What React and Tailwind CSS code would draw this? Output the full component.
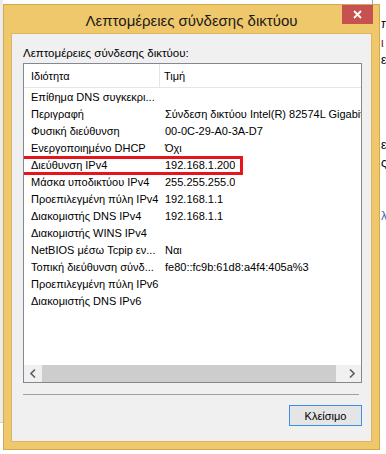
export default function App() {
  const rows = [
    ["Επίθημα DNS συγκεκρι...", ""],
    ["Περιγραφή", "Σύνδεση δικτύου Intel(R) 82574L Gigabit Network Connection"],
    ["Φυσική διεύθυνση", "00-0C-29-A0-3A-D7"],
    ["Ενεργοποιημένο DHCP", "Όχι"],
    ["Διεύθυνση IPv4", "192.168.1.200"],
    ["Μάσκα υποδικτύου IPv4", "255.255.255.0"],
    ["Προεπιλεγμένη πύλη IPv4", "192.168.1.1"],
    ["Διακομιστής DNS IPv4", "192.168.1.1"],
    ["Διακομιστής WINS IPv4", ""],
    ["NetBIOS μέσω Tcpip εν...", "Ναι"],
    ["Τοπική διεύθυνση σύνδ...", "fe80::fc9b:61d8:a4f4:405a%3"],
    ["Προεπιλεγμένη πύλη IPv6", ""],
    ["Διακομιστής DNS IPv6", ""],
  ];
  const font = { fontFamily: '"Liberation Sans", Arial, sans-serif' };
  return (
    <div
      className="relative w-[386px] h-[454px] overflow-hidden bg-white text-black"
      style={font}
    >
      {/* background desktop bits */}
      <div className="absolute left-0 top-0 w-[3px] h-[423px] bg-[#ececec] border-b border-[#d0d0d0]" />
      <div className="absolute left-[372px] top-0 w-px h-[4px] bg-[#a0a0a0]" />
      <div className="absolute left-[381px] top-[16px] text-[12px] leading-[16px] text-black">π</div>
      <div className="absolute left-[381px] top-[35px] text-[12px] leading-[16px] text-[#7a1010]">ι</div>
      <div className="absolute left-[381px] top-[52px] text-[12px] leading-[16px] text-black">ε</div>
      <div className="absolute left-[381px] top-[137px] text-[12px] leading-[16px] text-black">ε</div>
      <div className="absolute left-[381px] top-[155px] text-[12px] leading-[16px] text-black">ς</div>
      <div className="absolute left-[381px] top-[208px] text-[12px] leading-[16px] text-[#2a6ab0]">λ</div>

      {/* dialog window */}
      <div className="absolute left-[3px] top-[4px] w-[377px] h-[446px] border border-[#d4a853] bg-[#f0c86c] flex flex-col">
        {/* title bar */}
        <div className="relative h-[28px] shrink-0 flex justify-center items-start pt-[6px]">
          <span className="text-[15px] leading-[20px] text-[#1a1a1a]">
            Λεπτομέρειες σύνδεσης δικτύου
          </span>
          <div className="absolute right-[6px] top-0 w-[31px] h-[19px] bg-[#c75050] flex items-center justify-center">
            <svg width="9" height="9" viewBox="0 0 9 9">
              <path d="M1 1 L8 8 M8 1 L1 8" stroke="white" strokeWidth="1.8" />
            </svg>
          </div>
        </div>

        {/* client area */}
        <div className="mx-[7px] h-[409px] border border-[#dcb462] bg-[#f0f0f0] flex flex-col pl-[11px] pr-[9px]">
          <div className="mt-[11px] h-[16px] text-[11.5px] leading-[16px]">
            Λεπτομέρειες σύνδεσης δικτύου:
          </div>

          {/* list view */}
          <div className="relative mt-[2px] w-[339px] h-[320px] border border-[#828790] bg-white flex flex-col overflow-hidden">
            <div className="h-[24px] shrink-0 flex border-b border-[#e5e5e5] text-[11px] leading-[16px]">
              <div className="w-[136px] shrink-0 pl-[7px] flex items-center border-r border-[#e5e5e5]">
                Ιδιότητα
              </div>
              <div className="pl-[4px] flex items-center">Τιμή</div>
            </div>
            <div className="flex-1 flex flex-col">
              {rows.map(([k, v], i) => (
                <div key={i} className="h-[17px] shrink-0 flex items-center text-[11px] leading-[16px] whitespace-nowrap">
                  <div className="w-[136px] shrink-0 pl-[7px] overflow-hidden">{k}</div>
                  <div className="pl-[5px] overflow-hidden">{v}</div>
                </div>
              ))}
            </div>
            {/* horizontal scrollbar */}
            <div className="h-[17px] shrink-0 flex bg-[#f0f0f0]">
              <div className="w-[18px] shrink-0 flex items-center justify-center">
                <svg width="6" height="9" viewBox="0 0 6 9">
                  <path d="M5 0.5 L1 4.5 L5 8.5" fill="none" stroke="#606060" strokeWidth="1.6" />
                </svg>
              </div>
              <div className="w-[294px] shrink-0 bg-[#cdcdcd]" />
              <div className="flex-1" />
              <div className="w-[18px] shrink-0 flex items-center justify-center">
                <svg width="6" height="9" viewBox="0 0 6 9">
                  <path d="M1 0.5 L5 4.5 L1 8.5" fill="none" stroke="#606060" strokeWidth="1.6" />
                </svg>
              </div>
            </div>
            {/* red annotation */}
            <div className="absolute left-[-3px] top-[92px] w-[222px] h-[19px] border-[3px] border-[#e8141c]" />
          </div>

          <div className="mt-[11px] w-[336px] border-t border-[#a0a0a0]" />

          <div className="mt-[10px] flex justify-end">
            <div className="w-[73px] h-[21px] border border-[#3c8ee6] bg-[#e5e5e5] flex items-center justify-center text-[11px] leading-[16px]">
              Κλείσιμο
            </div>
          </div>
        </div>
      </div>
    </div>
  );
}
